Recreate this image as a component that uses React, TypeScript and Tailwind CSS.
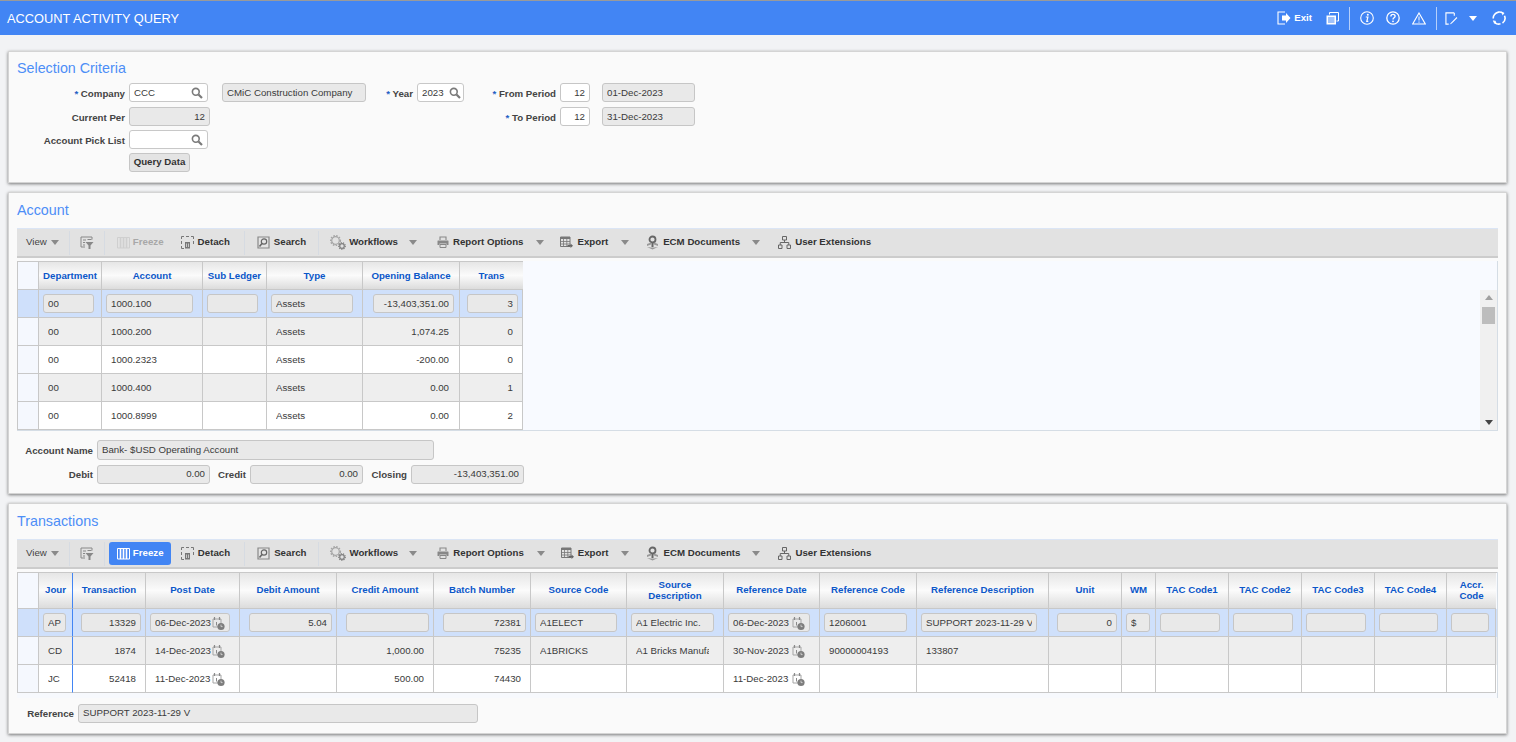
import type { ReactNode } from 'react';

const font = "font-['Liberation_Sans',Arial,sans-serif]";

// ---- icons ----

function Magnifier() {
    return (
        <svg width="12" height="12" viewBox="0 0 12 12" fill="none" className="shrink-0">
            <circle cx="4.8" cy="4.8" r="3.4" stroke="#7a7a7a" strokeWidth="1.6" />
            <path d="M7.5 7.5L11 11" stroke="#7a7a7a" strokeWidth="2.2" />
        </svg>
    );
}

function CalendarClock() {
    return (
        <svg width="13" height="15" viewBox="0 0 13 15" fill="none" className="shrink-0">
            <path d="M1 3h8v8H1z" stroke="#a5a5a5" strokeWidth="1" />
            <path d="M2.5 1v3M7.5 1v3" stroke="#8a8a8a" strokeWidth="1.2" />
            <path d="M4.5 6v3.5" stroke="#8a8a8a" strokeWidth="1" />
            <circle cx="9" cy="10.5" r="3.6" fill="#7d7d7d" />
            <path d="M9 8.6v2h1.6" stroke="#ddd" strokeWidth="0.8" />
        </svg>
    );
}

function Caret({ color = '#8a8a8a' }: { color?: string }) {
    return (
        <svg width="8" height="5" viewBox="0 0 8 5" className="shrink-0">
            <path d="M0 0h8L4 5z" fill={color} />
        </svg>
    );
}

function FilterIcon() {
    return (
        <svg width="14" height="14" viewBox="0 0 14 14" fill="none">
            <path d="M1 1h11v2.5M1 1v10h4" stroke="#888" strokeWidth="1" />
            <path d="M3 4h3M3 6.5h2M3 9h2M7.5 3.5h4" stroke="#888" strokeWidth="1" />
            <path d="M5.5 6h8L10.5 9.5V13h-2V9.5z" fill="#888" />
        </svg>
    );
}

function FreezeIcon({ color }: { color: string }) {
    return (
        <svg width="13" height="13" viewBox="0 0 13 13" fill="none">
            <path d="M.5 1.5h12V12H.5z" stroke={color} strokeWidth="1" />
            <path d="M3.5 1.5V12M6.5 1.5V12M9.5 1.5V12" stroke={color} strokeWidth="1.6" />
        </svg>
    );
}

function DetachIcon() {
    return (
        <svg width="13" height="13" viewBox="0 0 13 13" fill="none">
            <path d="M.5 3V.5H3M5 .5h3M10 .5h2.5V3M12.5 5v3M.5 5v3M.5 10v2.500H3" stroke="#777" strokeWidth="1" />
            <path d="M4 6h5v6.500H4z" fill="#777" />
            <path d="M5.5 7.5V11M7.5 7.5V11" stroke="#ddd" strokeWidth="0.8" />
        </svg>
    );
}

function SearchIcon() {
    return (
        <svg width="13" height="13" viewBox="0 0 13 13" fill="none">
            <path d="M1 1h11v11H1z" fill="#e4e4e4" stroke="#888" strokeWidth="1.2" />
            <circle cx="7" cy="5.5" r="2.7" stroke="#666" strokeWidth="1.2" />
            <path d="M5 7.5L2.500 10.500" stroke="#666" strokeWidth="1.6" />
        </svg>
    );
}

function GearsIcon() {
    return (
        <svg width="16" height="15" viewBox="0 0 16 15" fill="none">
            <circle cx="5.5" cy="5.5" r="3.8" stroke="#a5a5a5" strokeWidth="1.2" />
            <circle cx="5.5" cy="5.5" r="4.9" stroke="#a5a5a5" strokeWidth="1.4" strokeDasharray="1.5 1.4" />
            <circle cx="12" cy="11" r="2.3" stroke="#808080" strokeWidth="1.2" />
            <circle cx="12" cy="11" r="3.3" stroke="#808080" strokeWidth="1.2" strokeDasharray="1.2 1.1" />
        </svg>
    );
}

function PrinterIcon() {
    return (
        <svg width="12" height="12" viewBox="0 0 12 12" fill="none">
            <path d="M3 4V1h6v3" stroke="#888" strokeWidth="1.1" />
            <path d="M1 4.500h10a.5.5 0 0 1 .5.5v4H9.500V7.500h-7V9H.5V5a.5.5 0 0 1 .5-.5z" fill="#888" />
            <path d="M3 8.500h6v3H3z" stroke="#888" strokeWidth="1" />
        </svg>
    );
}

function ExportIcon() {
    return (
        <svg width="13" height="12" viewBox="0 0 13 12" fill="none">
            <path d="M.5 1H10v9.500H.5z" stroke="#777" strokeWidth="1" />
            <path d="M.5 1H10v2H.5z" fill="#777" />
            <path d="M3.5 3v7.500M6.8 3v7.500M.5 5.500H10M.5 8H10" stroke="#777" strokeWidth="0.8" />
            <path d="M7.5 9h3V7.500l2.500 2.200-2.500 2.200V10.500h-3z" fill="#666" />
        </svg>
    );
}

function EcmIcon() {
    return (
        <svg width="13" height="15" viewBox="0 0 13 15" fill="none">
            <circle cx="6.5" cy="4.5" r="3" stroke="#666" strokeWidth="1.8" />
            <path d="M5.500 7.500h2V12h-2z" fill="#666" />
            <path d="M1 9l4-1.500v2L1 11zM12 9L8 7.500v2l4 1.500zM1 12l5.500 2.500L12 12l-4 .5H5z" fill="#999" />
        </svg>
    );
}

function SitemapIcon() {
    return (
        <svg width="13" height="13" viewBox="0 0 13 13" fill="none">
            <path d="M4.500.5h4V4h-4zM.5 9H4v3.500H.5zM9 9h3.500v3.500H9z" stroke="#666" strokeWidth="1" />
            <path d="M6.500 4v2.500M2.250 9V6.500h8.500V9" stroke="#666" strokeWidth="1" />
        </svg>
    );
}

function ExitIcon() {
    return (
        <svg width="14" height="14" viewBox="0 0 14 14" fill="none">
            <path d="M8 1H1v12h7" stroke="#fff" strokeWidth="1.1" />
            <path d="M5 4.500h4V2l4.500 5L9 12V9.500H5z" fill="#fff" />
        </svg>
    );
}

function CopyIcon() {
    return (
        <svg width="13" height="13" viewBox="0 0 13 13" fill="none">
            <path d="M3.500 2.500v-2h9V9h-2" stroke="#fff" strokeWidth="1" />
            <path d="M.5 3.500H10v9H.5z" fill="#fff" />
            <path d="M2 6h6.500M2 8h6.500M2 10h6.500" stroke="#4285f4" strokeWidth="1" />
        </svg>
    );
}

function InfoIcon() {
    return (
        <svg width="14" height="14" viewBox="0 0 14 14" fill="none">
            <circle cx="7" cy="7" r="6.3" stroke="#fff" strokeWidth="1.1" />
            <circle cx="7.8" cy="3.8" r="1" fill="#fff" />
            <path d="M5.800 6h2.100L6.800 10.300h1.500" stroke="#fff" strokeWidth="1.2" />
        </svg>
    );
}

function HelpIcon() {
    return (
        <svg width="14" height="14" viewBox="0 0 14 14" fill="none">
            <circle cx="7" cy="7" r="6.2" stroke="#fff" strokeWidth="1.3" />
            <path d="M4.900 5.400c0-1.300 1-2 2.100-2s2.100.7 2.100 1.900c0 1.500-2.100 1.500-2.100 3.100" stroke="#fff" strokeWidth="1.4" />
            <circle cx="7" cy="10.3" r="0.9" fill="#fff" />
        </svg>
    );
}

function WarnIcon() {
    return (
        <svg width="14" height="13" viewBox="0 0 14 13" fill="none">
            <path d="M7 1L13.300 12H.7z" stroke="#fff" strokeWidth="1.1" />
            <path d="M7 4.500v4M7 9.500v1.200" stroke="#fff" strokeWidth="1" />
        </svg>
    );
}

function EditIcon() {
    return (
        <svg width="13" height="13" viewBox="0 0 14 14" fill="none">
            <path d="M10 1H1v12h3" stroke="#fff" strokeWidth="1.2" />
            <path d="M10 1v3" stroke="#fff" strokeWidth="1.2" />
            <path d="M12.500 5.500l-6 6L5 13.500l2.300-1 6-6z" fill="#fff" />
        </svg>
    );
}

function RefreshIcon() {
    return (
        <svg width="14" height="14" viewBox="0 0 14 14" fill="none">
            <path d="M2.500 3.500A6 6 0 0 1 11 2.300M12.500 4.800A6 6 0 0 1 10.500 12M8.500 12.800A6 6 0 0 1 1.500 9.500M1.200 7.500A6 6 0 0 1 2.500 3.500" stroke="#fff" strokeWidth="1.6" />
            <path d="M9.500.5l3 1.500-2 2.500zM4.500 13.500l-3-1.500 2-2.500z" fill="#fff" />
        </svg>
    );
}

// ---- form bits ----

function Field({
    children,
    align = 'left',
    plain = false,
    search = false,
    className = '',
}: {
    children?: ReactNode;
    align?: 'left' | 'right';
    plain?: boolean;
    search?: boolean;
    className?: string;
}) {
    const look = plain
        ? 'border border-transparent'
        : search
          ? 'border border-[#c8c8c8] bg-white rounded-[3px]'
          : 'border border-[#c6c6c6] bg-[#e9e9e9] rounded-[3px]';
    return (
        <div className={`flex items-center h-[19px] px-1 text-[9.7px] text-[#3a3a3a] box-border ${look} ${className}`}>
            <span className={`flex-1 min-w-0 pt-px overflow-hidden whitespace-nowrap ${align === 'right' ? 'text-right' : ''}`}>{children}</span>
            {search && <Magnifier />}
        </div>
    );
}

function Label({ children, req = false, className = '' }: { children: ReactNode; req?: boolean; className?: string }) {
    return (
        <div className={`text-[9.7px] leading-[19px] pt-px font-bold text-[#444] text-right whitespace-nowrap pr-1 ${className}`}>
            {req && <span className="text-[#1f5fc4]">* </span>}
            {children}
        </div>
    );
}

function Panel({ title, className, children }: { title: string; className: string; children: ReactNode }) {
    return (
        <section className={`ml-[8px] mr-[9px] bg-[#fafafa] border border-[#d4d4d4] shadow-[0_1px_3px_rgba(0,0,0,0.5)] px-[8px] box-border ${className}`}>
            <h2 className="text-[14.3px] leading-[18px] text-[#4d8ef7] font-normal">{title}</h2>
            {children}
        </section>
    );
}

// ---- toolbar ----

function ToolItem({ icon, label, ml, dim = false, labelGap = 'ml-[4px]' }: { icon: ReactNode; label: string; ml: string; dim?: boolean; labelGap?: string }) {
    return (
        <div className={`flex items-center ${ml}`}>
            {icon}
            <span className={`${labelGap} text-[9.7px] font-bold ${dim ? 'text-[#a8a8a8]' : 'text-[#333]'}`}>{label}</span>
        </div>
    );
}

function Sep({ ml }: { ml: string }) {
    return <div className={`w-px h-[24px] bg-[#d6dbe2] ${ml}`} />;
}

function Toolbar({ frozen }: { frozen: boolean }) {
    return (
        <div className="flex items-center h-[30px] bg-[#e2e2e2] border-t border-t-[#dbe5f5] border-b-2 border-b-[#cccccc] box-border">
            <span className="ml-[9px] text-[9.7px] text-[#444]">View</span>
            <div className="ml-[4px]"><Caret /></div>
            <Sep ml="ml-[10px]" />
            <div className="ml-[10px] w-[14px]"><FilterIcon /></div>
            <Sep ml="ml-[10px]" />
            {frozen ? (
                <div className="ml-[4px] flex items-center h-[23px] w-[62px] rounded-[3px] bg-[#4285f4] pl-[8px]">
                    <FreezeIcon color="#fff" />
                    <span className="ml-[3px] text-[9.7px] font-bold text-white">Freeze</span>
                </div>
            ) : (
                <ToolItem ml="ml-[12px]" icon={<FreezeIcon color="#cfcfcf" />} label="Freeze" labelGap="ml-[3px]" dim />
            )}
            <ToolItem ml={frozen ? 'ml-[10px]' : 'ml-[17px]'} icon={<DetachIcon />} label="Detach" />
            <Sep ml="ml-[14px]" />
            <ToolItem ml="ml-[12px]" icon={<SearchIcon />} label="Search" />
            <Sep ml="ml-[12px]" />
            <ToolItem ml="ml-[11px]" icon={<GearsIcon />} label="Workflows" labelGap="ml-[3px]" />
            <div className="ml-[11px]"><Caret /></div>
            <ToolItem ml="ml-[20px]" icon={<PrinterIcon />} label="Report Options" />
            <div className="ml-[13px]"><Caret /></div>
            <ToolItem ml="ml-[16px]" icon={<ExportIcon />} label="Export" />
            <div className="ml-[13px]"><Caret /></div>
            <ToolItem ml="ml-[17px]" icon={<EcmIcon />} label="ECM Documents" labelGap="ml-[4px]" />
            <div className="ml-[12px]"><Caret /></div>
            <ToolItem ml="ml-[18px]" icon={<SitemapIcon />} label="User Extensions" />
        </div>
    );
}

// ---- grid ----

type Col = { head: ReactNode; w: string; pad: string; right?: boolean; date?: boolean; edge?: boolean; fc?: string };

type GridProps = { cols: Col[]; rows: string[][]; headH: string; headPad?: string };

function Grid({ cols, rows, headH, headPad = '' }: GridProps) {
    return (
        <div className="shrink-0 border-t border-[#c8c8c8]">
            <div className={`flex ${headH}`}>
                <div className="w-[21px] shrink-0 border-l border-b border-[#c8c8c8] bg-[#f5f8fe] box-border" />
                {cols.map((c, i) => (
                    <div
                        key={i}
                        className={`${c.w} ${headPad} shrink-0 box-border flex items-center justify-center text-center border-l border-b border-[#c8c8c8] bg-linear-to-b from-[#e6e6e6] via-[#fbfbfb] to-[#dcdcdc] text-[9.7px] leading-[10.5px] font-bold text-[#0b57c9] ${c.edge ? 'border-l-[#4285f4]' : ''}`}
                    >
                        {c.head}
                    </div>
                ))}
            </div>
            {rows.map((row, r) => (
                <div key={r} className={`flex h-[28px] ${r === 0 ? 'bg-[#cfe0fb]' : r % 2 === 1 ? 'bg-[#eeeeee]' : 'bg-white'}`}>
                    <div className={`w-[21px] shrink-0 border-l border-b border-[#c8c8c8] box-border ${r === 0 ? '' : 'bg-[#f5f8fe]'}`} />
                    {cols.map((c, i) => (
                        <div key={i} className={`${c.w} ${c.pad} shrink-0 box-border flex items-center border-l border-b border-[#c8c8c8] ${c.edge ? 'border-l-[#4285f4]' : ''}`}>
                            <Field plain={r !== 0} align={c.right ? 'right' : 'left'} className={`w-full ${c.fc ?? ''}`}>
                                {c.date ? (
                                    <span className="flex items-center justify-between">
                                        {row[i]}
                                        <CalendarClock />
                                    </span>
                                ) : (
                                    row[i]
                                )}
                            </Field>
                        </div>
                    ))}
                </div>
            ))}
        </div>
    );
}

const accountCols: Col[] = [
    { head: 'Department', w: 'w-[63px]', pad: 'pl-[4px] pr-[7px]' },
    { head: 'Account', w: 'w-[101px]', pad: 'pl-[4px] pr-[9px]' },
    { head: 'Sub Ledger', w: 'w-[64px]', pad: 'pl-[4px] pr-[8px]' },
    { head: 'Type', w: 'w-[96px]', pad: 'pl-[4px] pr-[9px]' },
    { head: 'Opening Balance', w: 'w-[97px]', pad: 'pl-[10px] pr-[5px]', right: true },
    { head: 'Trans', w: 'w-[64px]', pad: 'pl-[7px] pr-[4px] border-r', right: true },
];

const accountRows = [
    ['00', '1000.100', '', 'Assets', '-13,403,351.00', '3'],
    ['00', '1000.200', '', 'Assets', '1,074.25', '0'],
    ['00', '1000.2323', '', 'Assets', '-200.00', '0'],
    ['00', '1000.400', '', 'Assets', '0.00', '1'],
    ['00', '1000.8999', '', 'Assets', '0.00', '2'],
];

const txCols: Col[] = [
    { head: 'Jour', w: 'w-[34px]', pad: 'pl-[4px] pr-[6px]', fc: '!pr-0' },
    { head: 'Transaction', w: 'w-[73px]', pad: 'pl-[8px] pr-[4px]', right: true, edge: true },
    { head: 'Post Date', w: 'w-[94px]', pad: 'pl-[4px] pr-[9px]', date: true },
    { head: 'Debit Amount', w: 'w-[97px]', pad: 'pl-[9px] pr-[4px]', right: true },
    { head: 'Credit Amount', w: 'w-[97px]', pad: 'pl-[9px] pr-[4px]', right: true },
    { head: 'Batch Number', w: 'w-[97px]', pad: 'pl-[9px] pr-[4px]', right: true },
    { head: 'Source Code', w: 'w-[96px]', pad: 'pl-[4px] pr-[9px]' },
    { head: <>Source<br />Description</>, w: 'w-[97px]', pad: 'pl-[4px] pr-[9px]' },
    { head: 'Reference Date', w: 'w-[96px]', pad: 'pl-[4px] pr-[9px]', date: true },
    { head: 'Reference Code', w: 'w-[97px]', pad: 'pl-[4px] pr-[9px]' },
    { head: 'Reference Description', w: 'w-[132px]', pad: 'pl-[4px] pr-[11px]' },
    { head: 'Unit', w: 'w-[73px]', pad: 'pl-[8px] pr-[4px]', right: true },
    { head: 'WM', w: 'w-[34px]', pad: 'pl-[4px] pr-[5px]' },
    { head: 'TAC Code1', w: 'w-[73px]', pad: 'pl-[4px] pr-[8px]' },
    { head: 'TAC Code2', w: 'w-[73px]', pad: 'pl-[4px] pr-[8px]' },
    { head: 'TAC Code3', w: 'w-[73px]', pad: 'pl-[4px] pr-[8px]' },
    { head: 'TAC Code4', w: 'w-[72px]', pad: 'pl-[4px] pr-[8px]' },
    { head: <>Accr.<br />Code</>, w: 'w-[50px]', pad: 'pl-[4px] pr-[6px] border-r' },
];

const txRows = [
    ['AP', '13329', '06-Dec-2023', '5.04', '', '72381', 'A1ELECT', 'A1 Electric Inc.', '06-Dec-2023', '1206001', 'SUPPORT 2023-11-29 V', '0', '$', '', '', '', '', ''],
    ['CD', '1874', '14-Dec-2023', '', '1,000.00', '75235', 'A1BRICKS', 'A1 Bricks Manufa', '30-Nov-2023', '90000004193', '133807', '', '', '', '', '', '', ''],
    ['JC', '52418', '11-Dec-2023', '', '500.00', '74430', '', '', '11-Dec-2023', '', '', '', '', '', '', '', '', ''],
];

export default function App() {
    return (
        <div className={`${font} h-[742px] overflow-hidden bg-[#f2f3f5]`}>
            <header className="h-[35px] bg-[#4285f4] border-t border-t-[#9a9a9a] flex items-center text-white box-border">
                <h1 className="ml-[7px] mt-[2px] text-[12.8px] font-normal">ACCOUNT ACTIVITY QUERY</h1>
                <div className="ml-auto mr-[10px] flex items-center">
                    <ExitIcon />
                    <span className="ml-[3px] text-[9.7px] font-bold">Exit</span>
                    <div className="ml-[14px]"><CopyIcon /></div>
                    <div className="ml-[10px] w-px h-[23px] bg-[#b5cffb]" />
                    <div className="ml-[10px]"><InfoIcon /></div>
                    <div className="ml-[12px]"><HelpIcon /></div>
                    <div className="ml-[12px]"><WarnIcon /></div>
                    <div className="ml-[10px] w-px h-[23px] bg-[#b5cffb]" />
                    <div className="ml-[8px]"><EditIcon /></div>
                    <div className="ml-[11px]"><Caret color="#fff" /></div>
                    <div className="ml-[15px]"><RefreshIcon /></div>
                </div>
            </header>

            <main className="pt-[16px] flex flex-col gap-[9px]">
                <Panel title="Selection Criteria" className="h-[132px] pt-[7px]">
                    <div className="mt-[6px] grid grid-cols-[112px_93px_150px_45px_59px_84px_42px_93px] grid-rows-[24px_23px_23px_23px] items-start">
                        <Label req>Company</Label>
                        <Field search className="w-[79px]">CCC</Field>
                        <Field className="w-[144px]">CMiC Construction Company</Field>
                        <Label req>Year</Label>
                        <Field search className="w-[47px] !pr-[2px]">2023</Field>
                        <Label req>From Period</Label>
                        <Field align="right" className="w-[30px] !bg-white">12</Field>
                        <Field className="w-[93px]">01-Dec-2023</Field>

                        <Label>Current Per</Label>
                        <Field align="right" className="w-[81px]">12</Field>
                        <div />
                        <div />
                        <div />
                        <Label req>To Period</Label>
                        <Field align="right" className="w-[30px] !bg-white">12</Field>
                        <Field className="w-[93px]">31-Dec-2023</Field>

                        <Label>Account Pick List</Label>
                        <Field search className="w-[79px]" />
                        <div className="col-span-6" />

                        <div />
                        <button className="w-[61px] h-[19px] rounded-[3px] border border-[#c6c6c6] bg-[#e4e4e4] text-[9.7px] font-bold text-[#333]">Query Data</button>
                    </div>
                </Panel>

                <Panel title="Account" className="h-[302px] pt-[8px]">
                    <div className="mt-[9px]">
                        <Toolbar frozen={false} />
                    </div>
                    <div className="mt-[3px] flex h-[170px] bg-[#f8faff] border-r border-b border-[#d5dde5]">
                        <Grid cols={accountCols} rows={accountRows} headH="h-[28px]" headPad="pt-px" />
                        <div className="flex-1 flex justify-end pt-[29px]">
                            <div className="w-[17px] bg-[#f0f0f0] flex flex-col items-center justify-between py-[5px]">
                                <div className="flex flex-col items-center gap-[7px]">
                                    <div className="w-0 h-0 border-x-[4px] border-x-transparent border-b-[5px] border-b-[#a0a0a0]" />
                                    <div className="w-[13px] h-[17px] bg-[#bdbdbd]" />
                                </div>
                                <Caret color="#444" />
                            </div>
                        </div>
                    </div>
                    <div className="mt-[9px] flex items-center">
                        <Label className="w-[80px]">Account Name</Label>
                        <Field className="w-[337px] !h-[20px]">Bank- $USD Operating Account</Field>
                    </div>
                    <div className="mt-[4px] flex items-center">
                        <Label className="w-[80px]">Debit</Label>
                        <Field align="right" className="w-[113px]">0.00</Field>
                        <Label className="w-[40px]">Credit</Label>
                        <Field align="right" className="w-[113px]">0.00</Field>
                        <Label className="w-[48px]">Closing</Label>
                        <Field align="right" className="w-[113px]">-13,403,351.00</Field>
                    </div>
                </Panel>

                <Panel title="Transactions" className="h-[231px] pt-[8px]">
                    <div className="mt-[9px]">
                        <Toolbar frozen />
                    </div>
                    <div className="mt-[3px] h-[126px] bg-[#f7f9fd] border-r border-[#d5dde5]">
                        <Grid cols={txCols} rows={txRows} headH="h-[36px]" />
                    </div>
                    <div className="mt-[5px] flex items-center">
                        <Label className="w-[61px]">Reference</Label>
                        <Field className="w-[400px]">SUPPORT 2023-11-29 V</Field>
                    </div>
                </Panel>
            </main>
        </div>
    );
}
